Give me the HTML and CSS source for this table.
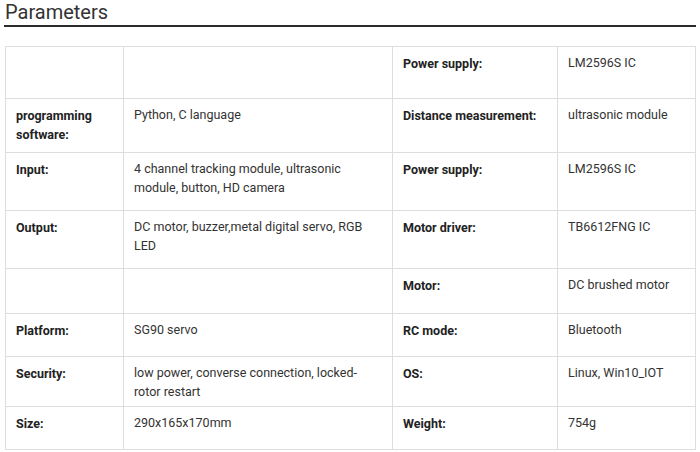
FILE: index.html
```html
<!DOCTYPE html>
<html>
<head>
<meta charset="utf-8">
<link rel="stylesheet" href="styles.css">
</head>
<body>
<h2 class="title">Parameters</h2>
<table class="params">
  <colgroup>
    <col class="c1"><col class="c2"><col class="c3"><col class="c4">
  </colgroup>
  <tr class="r1"><td></td><td></td><th>Power supply:</th><td>LM2596S IC</td></tr>
  <tr class="r2"><th>programming software:</th><td>Python, C language</td><th>Distance measurement:</th><td>ultrasonic module</td></tr>
  <tr class="r3"><th>Input:</th><td>4 channel tracking module, ultrasonic module, button, HD camera</td><th>Power supply:</th><td>LM2596S IC</td></tr>
  <tr class="r4"><th>Output:</th><td>DC motor, buzzer,metal digital servo, RGB LED</td><th>Motor driver:</th><td>TB6612FNG IC</td></tr>
  <tr class="r5"><td></td><td></td><th>Motor:</th><td>DC brushed motor</td></tr>
  <tr class="r6"><th>Platform:</th><td>SG90 servo</td><th>RC mode:</th><td>Bluetooth</td></tr>
  <tr class="r7"><th>Security:</th><td>low power, converse connection, locked-rotor restart</td><th>OS:</th><td>Linux, Win10_IOT</td></tr>
  <tr class="r8"><th>Size:</th><td>290x165x170mm</td><th>Weight:</th><td>754g</td></tr>
</table>
</body>
</html>
```
FILE: styles.css
```css
html, body {
  margin: 0;
  padding: 0;
  background: #fff;
}
body {
  padding: 0 4px;
  font-family: Roboto, "Liberation Sans", sans-serif;
  color: #333;
}
.title {
  margin: 0;
  font-size: 20px;
  line-height: 24px;
  font-weight: 400;
  color: #333;
  padding: 0 0 1px 1px;
  border-bottom: 2px solid #2b2b2b;
}
.params {
  margin: 19px 1px 0 1px;
  width: 690px;
  table-layout: fixed;
  border-collapse: collapse;
  font-size: 12.5px;
  line-height: 19px;
}
.c1 { width: 118px; }
.c2 { width: 269px; }
.c3 { width: 165px; }
.c4 { width: 138px; }
.params td, .params th {
  border: 1px solid #ddd;
  vertical-align: top;
  text-align: left;
  padding: 6px 10px 0 10px;
}
.params th {
  font-weight: 700;
  color: #222;
  padding-top: 7px;
}
.params td {
  color: #333;
}
.r1 { height: 52px; }
.r2 { height: 54px; }
.r3 { height: 58px; }
.r4 { height: 58px; }
.r5 { height: 45px; }
.r6 { height: 43px; }
.r7 { height: 50px; }
.r8 { height: 43px; }
```
